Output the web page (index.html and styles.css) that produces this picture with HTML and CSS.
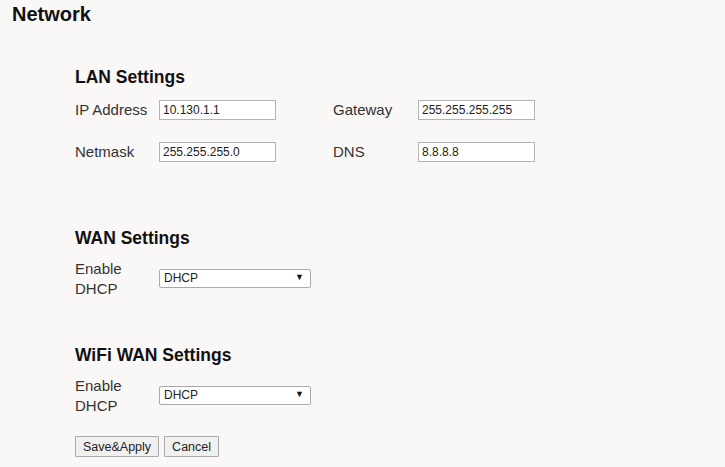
FILE: index.html
```html
<!DOCTYPE html>
<html>
    <head>
        <title>Network</title>
        <link rel="stylesheet" href="styles.css">
    </head>
    <body>
        <h1>Network</h1>
        <div class="content">
            <h2 class="lan">LAN Settings</h2>
            <div class="grid">
                <label>IP Address</label>
                <input type="text" value="10.130.1.1">
                <label>Gateway</label>
                <input type="text" value="255.255.255.255">
                <label>Netmask</label>
                <input type="text" value="255.255.255.0">
                <label>DNS</label>
                <input type="text" value="8.8.8.8">
            </div>

            <h2 class="wan">WAN Settings</h2>
            <div class="grid">
                <label>Enable DHCP</label>
                <div class="select">
                    <select>
                        <option>DHCP</option>
                        <option>Static</option>
                    </select>
                </div>
            </div>

            <h2 class="wan wifi">WiFi WAN Settings</h2>
            <div class="grid">
                <label>Enable DHCP</label>
                <div class="select">
                    <select>
                        <option>DHCP</option>
                        <option>Static</option>
                    </select>
                </div>
            </div>

            <div class="buttons">
                <button>Save&amp;Apply</button>
                <button>Cancel</button>
            </div>
        </div>
    </body>
</html>
```

FILE: styles.css
```css
body {
    margin: 0;
    background-color: #faf7f7;
    font-family: "Liberation Sans", Arial, sans-serif;
    color: #222;
}

h1 {
    font-size: 20px;
    line-height: 23px;
    margin: 3px 0 0 12px;
    color: #111;
}

.content {
    padding-left: 75px;
}

h2 {
    font-size: 17.5px;
    line-height: 20px;
    margin: 41px 0 11px 0;
    color: #111;
}

h2.lan {
    margin-bottom: 13px;
}

h2.wan {
    margin-top: 66px;
    margin-bottom: 11px;
}

h2.wifi {
    margin-top: 46px;
}

.grid {
    display: grid;
    grid-template-columns: 84px 174px 85px 117px;
    row-gap: 22px;
    align-items: center;
}

label {
    font-size: 15px;
    line-height: 20px;
    color: #333;
}

input {
    box-sizing: border-box;
    width: 117px;
    height: 20px;
    margin: 0;
    padding: 0 3px;
    border: 1px solid #b4b4b4;
    background: #fff;
    font-family: "Liberation Sans", Arial, sans-serif;
    font-size: 12px;
    color: #222;
}

.select {
    position: relative;
    width: 152px;
    margin-bottom: 2px;
}

.select select {
    -webkit-appearance: none;
    appearance: none;
    box-sizing: border-box;
    width: 152px;
    height: 19px;
    margin: 0;
    padding: 0 4px;
    border: 1px solid #aaa;
    border-radius: 2px;
    background: #fff;
    font-family: "Liberation Sans", Arial, sans-serif;
    font-size: 12px;
    color: #222;
}

.select::after {
    content: "\25BC";
    position: absolute;
    right: 7px;
    top: 4px;
    font-size: 9px;
    color: #111;
    pointer-events: none;
}

.buttons {
    margin-top: 20px;
    display: flex;
    gap: 5px;
}

button {
    height: 21px;
    padding: 0 7px;
    border: 1px solid #aaa;
    border-radius: 1px;
    background: #f0f0f0;
    font-family: "Liberation Sans", Arial, sans-serif;
    font-size: 12.5px;
    color: #222;
}
```
